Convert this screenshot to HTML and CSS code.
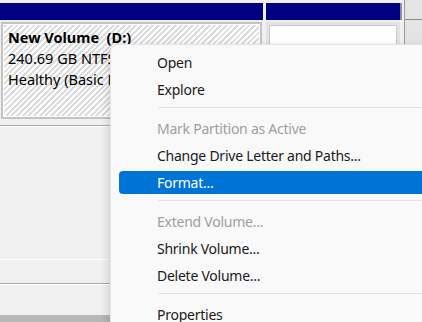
FILE: index.html
```html
<!DOCTYPE html>
<html>
<head>
<meta charset="utf-8">
<title>Disk Management</title>
<link rel="stylesheet" href="styles.css">
</head>
<body>

<!-- disk map -->
<div class="screen">
	<div class="disks">
		<div class="col col-main">
			<div class="head"></div>
			<div class="part hatch">
				<div class="vol-name">New Volume&nbsp;&nbsp;(D:)</div>
				<div>240.69 GB NTFS</div>
				<div>Healthy (Basic Data Partition)</div>
			</div>
		</div>
		<div class="col col-free">
			<div class="head"></div>
			<div class="part free"></div>
		</div>
		<div class="vscroll"><div class="thumb"></div></div>
	</div>

	<div class="lower">
		<div class="rule"></div>
		<div class="blank"></div>
		<div class="rule-white"></div>
		<div class="blank2"></div>
		<div class="rule"></div>
		<div class="blank3"></div>
		<div class="status"></div>
	</div>

	<!-- context menu -->
	<div class="menu">
		<div class="item">Open</div>
		<div class="item">Explore</div>
		<div class="sep"></div>
		<div class="item disabled">Mark Partition as Active</div>
		<div class="item">Change Drive Letter and Paths...</div>
		<div class="item selected">Format...</div>
		<div class="sep"></div>
		<div class="item disabled">Extend Volume...</div>
		<div class="item">Shrink Volume...</div>
		<div class="item">Delete Volume...</div>
		<div class="sep"></div>
		<div class="item">Properties</div>
	</div>
</div>

</body>
</html>
```

FILE: styles.css
```css
* {
  box-sizing: border-box;
}
body {
  margin: 0;
  background: #f0f0f0;
  font-family: "Noto Sans", "Open Sans", sans-serif;
  font-size: 14px;
  color: #000;
}

.screen {
  position: relative;
  width: 422px;
  height: 322px;
  overflow: hidden;
}

.disks {
  display: flex;
  padding-top: 3px;
  height: 119px;
}
.col {
  display: flex;
  flex-direction: column;
}
.col-main {
  width: 263px;
}
.col-free {
  width: 136px;
  margin-left: 3px;
}
.head {
  height: 17px;
  background: #000080;
}
.col-free .head {
  border-right: 2px solid #8c8ca8;
}
.part {
  margin-top: 2px;
  height: 97px;
  border: 2px solid #c3c3c3;
  box-shadow: inset 0 0 0 1px #fff;
  padding: 3px 5px;
  line-height: 21px;
  font-size: 14.5px;
}
.hatch {
  background: repeating-linear-gradient(135deg, #fff 0, #fff 2px, #dcdcdc 2px, #dcdcdc 4px);
  margin-left: 1px;
  margin-right: 1px;
}
.vol-name {
  font-weight: bold;
}
.free {
  margin-right: 2px;
  background: #fff;
  border: 3px solid #e2e2e2;
  box-shadow: inset 0 0 0 1px #c8c8c8;
  padding: 0;
}

.vscroll {
  flex: 1;
  margin-left: 2px;
  margin-top: -3px;
  height: 122px;
  border-left: 1px solid #9a9a9a;
  background: #e4e4e4;
}
.vscroll .thumb {
  height: 20px;
  border-bottom: 1px solid #8a8a8a;
}

.lower {
  padding-top: 6px;
}
.lower .rule {
  height: 2px;
  border-top: 1px solid #a8a8a8;
  border-bottom: 1px solid #fff;
}
.lower .blank {
  height: 132px;
}
.lower .rule-white {
  height: 1px;
  background: #fff;
}
.lower .blank2 {
  height: 23px;
}
.lower .blank3 {
  height: 30px;
}
.lower .status {
  height: 10px;
  background: #b8b8b8;
}

.menu {
  position: absolute;
  left: 110px;
  top: 44px;
  width: 330px;
  height: 300px;
  display: flex;
  flex-direction: column;
  background: #f9f9f9;
  border: 1px solid #e4e4e4;
  border-radius: 8px;
  box-shadow: -2px 2px 8px rgba(0,0,0,0.14);
  padding-top: 4px;
  font-size: 14px;
  letter-spacing: -0.25px;
}
.item {
  flex: none;
  height: 23px;
  line-height: 23px;
  margin: 2px 0 2px 8px;
  padding-left: 38px;
  border-radius: 4px;
  color: #1a1a1a;
  white-space: nowrap;
}
.item.disabled {
  color: #9e9e9e;
}
.item.selected {
  background: #0074d6;
  color: #fff;
}
.sep {
  flex: none;
  height: 1px;
  background: #e3e3e3;
  margin: 4px 0 7px 47px;
}
```
